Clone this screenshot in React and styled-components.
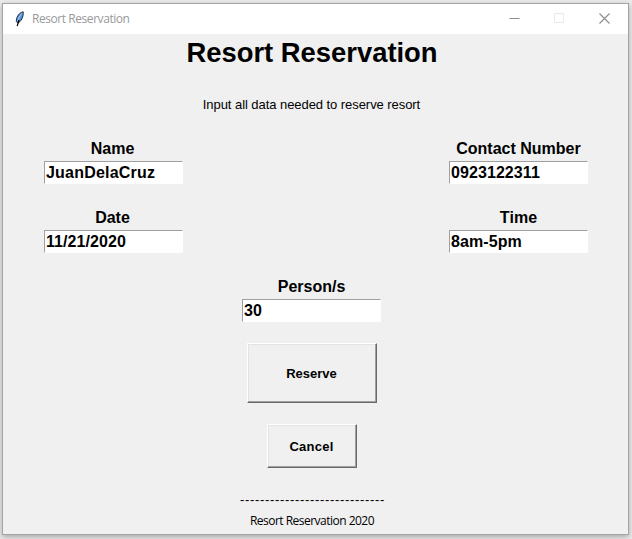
import React from "react";
import styled, { createGlobalStyle } from "styled-components";

const GlobalStyle = createGlobalStyle`
  * { box-sizing: border-box; }
  body {
    margin: 0;
    background: #e4e4e4;
    overflow: hidden;
    font-kerning: none;
  }
`;

const Desktop = styled.div`
  width: 632px;
  height: 539px;
  padding: 3px 3px 4px 2px;
  background: #ececec;
  overflow: hidden;
`;

const Window = styled.main`
  display: flex;
  flex-direction: column;
  width: 627px;
  height: 532px;
  border: 1px solid #a5a5a5;
  background: #f0f0f0;
  box-shadow: 0 2px 6px rgba(0, 0, 0, 0.3);
`;

const TitleBar = styled.header`
  display: flex;
  align-items: center;
  height: 30px;
  flex: none;
  padding-left: 11px;
  background: #fff;
`;

const WindowTitle = styled.span`
  flex: 1;
  margin-left: 6px;
  font: 12px/30px "Open Sans", sans-serif;
  letter-spacing: -0.44px;
  color: #999;
`;

const Controls = styled.div`
  display: flex;
  padding-right: 1px;
`;

const Control = styled.button`
  display: grid;
  place-items: center;
  width: 45px;
  height: 30px;
  padding: 0 0 1px;
  border: 0;
  background: none;
  color: ${(p) => (p.$faded ? "#e9e9e9" : "#8c8c8c")};
`;

const Content = styled.form`
  display: flex;
  flex-direction: column;
  align-items: center;
  padding-right: 8px;
  font-family: "Liberation Sans", Arial, sans-serif;
  color: #000;
`;

const Heading = styled.h1`
  margin: 0;
  padding-left: 1px;
  font-size: 27.4px;
  line-height: 37px;
`;

const Hint = styled.p`
  margin: 25px 0 24px;
  font-size: 13px;
  line-height: 18px;
  letter-spacing: -0.06px;
`;

const FieldRow = styled.div`
  display: flex;
  justify-content: ${(p) => (p.$single ? "center" : "space-between")};
  width: 544px;
  margin: 0 0 ${(p) => (p.$single ? 21 : 23)}px ${(p) => (p.$single ? 0 : 9)}px;
`;

const Field = styled.label`
  display: flex;
  flex-direction: column;
  align-items: center;
  width: 139px;
`;

const FieldName = styled.span`
  padding-right: ${(p) => p.$inset ?? 0}px;
  font-size: 16px;
  font-weight: 700;
  line-height: 22px;
`;

const Entry = styled.input`
  width: 139px;
  height: 23px;
  margin-top: 1px;
  padding: 0 0 0 1px;
  border: 1px solid #fff;
  border-top-color: #a0a0a0;
  border-left-color: #a0a0a0;
  border-radius: 0;
  outline: 0;
  background: #fff;
  color: #000;
  font: 700 16px/20px "Liberation Sans", Arial, sans-serif;
  letter-spacing: ${(p) => p.$tracking ?? 0.08}px;
`;

const PushButton = styled.button`
  width: ${(p) => p.$w}px;
  height: ${(p) => p.$h}px;
  margin-bottom: 21px;
  padding: 0;
  border: 1px solid #696969;
  border-top-color: #fff;
  border-left-color: #fff;
  border-radius: 0;
  background: #f0f0f0;
  box-shadow: inset -1px -1px #a0a0a0, inset 1px 1px #e3e3e3;
  color: #000;
  font: 700 13px "Liberation Sans", Arial, sans-serif;
  letter-spacing: ${(p) => p.$tracking ?? 0}px;
`;

const Rule = styled.div`
  margin-top: 3px;
  padding-left: 2px;
  font-size: 13px;
  line-height: 16px;
  letter-spacing: 0.67px;
`;

const Footer = styled.footer`
  margin-top: 4px;
  font: 12px/18px "Open Sans", sans-serif;
  letter-spacing: -0.52px;
  padding-left: 1px;
`;

function FeatherIcon() {
  return (
    <svg width="12" height="16" viewBox="0 0 12 16">
      <path d="M9.2 .8C6.6 1 3.6 4 2.6 7.5L2.3 10.5 3.8 12C6.8 11 9.8 6 9.2 .8Z" fill="#4d8fd6" stroke="#1b2430" strokeWidth="0.9" />
      <path d="M7.8 2.5C5.8 4.8 4.6 7.5 3.8 10" fill="none" stroke="#b9dcf8" strokeWidth="1" />
      <path d="M5 9L3.2 15.2" fill="none" stroke="#000" strokeWidth="1.2" />
    </svg>
  );
}

function LabeledEntry({ label, value, tracking, inset }) {
  return (
    <Field>
      <FieldName $inset={inset}>{label}</FieldName>
      <Entry defaultValue={value} $tracking={tracking} spellCheck={false} />
    </Field>
  );
}

export default function App() {
  return (
    <Desktop>
      <GlobalStyle />
      <Window>
        <TitleBar>
          <FeatherIcon />
          <WindowTitle>Resort Reservation</WindowTitle>
          <Controls>
            <Control aria-label="Minimize">
              <svg width="11" height="11"><path d="M.5 5.5H10.5" stroke="currentColor" /></svg>
            </Control>
            <Control aria-label="Maximize" $faded>
              <svg width="11" height="11"><path d="M.5 .5H9.5V9.5H.5Z" fill="none" stroke="currentColor" /></svg>
            </Control>
            <Control aria-label="Close">
              <svg width="11" height="11"><path d="M.5 .5L10.5 10.5M10.5 .5L.5 10.5" stroke="currentColor" strokeWidth="1.1" /></svg>
            </Control>
          </Controls>
        </TitleBar>
        <Content onSubmit={(e) => e.preventDefault()}>
          <Heading>Resort Reservation</Heading>
          <Hint>Input all data needed to reserve resort</Hint>
          <FieldRow>
            <LabeledEntry label="Name" value="JuanDelaCruz" tracking={0.2} inset={2} />
            <LabeledEntry label="Contact Number" value="0923122311" />
          </FieldRow>
          <FieldRow>
            <LabeledEntry label="Date" value="11/21/2020" inset={2} />
            <LabeledEntry label="Time" value="8am-5pm" />
          </FieldRow>
          <FieldRow $single>
            <LabeledEntry label="Person/s" value="30" />
          </FieldRow>
          <PushButton $w={130} $h={60}>Reserve</PushButton>
          <PushButton $w={90} $h={44} $tracking={0.25} type="button">Cancel</PushButton>
          <Rule>{"-".repeat(29)}</Rule>
          <Footer>Resort Reservation 2020</Footer>
        </Content>
      </Window>
    </Desktop>
  );
}
